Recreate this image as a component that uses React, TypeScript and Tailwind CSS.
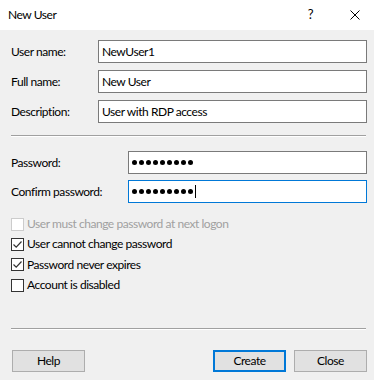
import React from "react";

const font = { fontFamily: 'Lato, "Noto Sans", sans-serif' };

function Field({ label, value, labelW, focused, password }: { label: string; value: string; labelW: string; focused?: boolean; password?: boolean }) {
  return (
    <div className="flex items-center">
      <div className={`${labelW} shrink-0 text-[12px] text-black`}>{label}</div>
      <div
        className={`flex h-[23px] flex-1 items-center bg-white px-[3px] text-[12px] text-black ${
          focused ? "border border-[#0078d7]" : "border border-[#7a7a7a]"
        }`}
      >
        {password ? (
          <span className="flex items-center">
            {Array.from({ length: 9 }).map((_, i) => (
              <span key={i} className="mr-[2px] inline-block h-[5px] w-[5px] rounded-full bg-black" />
            ))}
            {focused && <span className="inline-block h-[13px] w-px bg-black" />}
          </span>
        ) : (
          value
        )}
      </div>
    </div>
  );
}

function Check({ label, checked, disabled }: { label: string; checked?: boolean; disabled?: boolean }) {
  return (
    <div className="flex h-[20.3px] items-center">
      <div
        className={`flex h-[13px] w-[13px] items-center justify-center border bg-white ${
          disabled ? "border-[#cccccc]" : "border-[#333333]"
        }`}
      >
        {checked && (
          <svg width="11" height="11" viewBox="0 0 11 11">
            <path d="M1.5 5.5 L4.2 8.2 L9.5 2.5" fill="none" stroke="#333" strokeWidth="1.2" />
          </svg>
        )}
      </div>
      <span className={`ml-[3px] text-[12px] ${disabled ? "text-[#a0a0a0]" : "text-black"}`}>{label}</span>
    </div>
  );
}

function Btn({ label, primary }: { label: string; primary?: boolean }) {
  return (
    <button
      className={`flex h-[22px] w-[73px] items-center justify-center bg-[#e1e1e1] text-[12px] text-black ${
        primary ? "border-2 border-[#0078d7]" : "border border-[#adadad]"
      }`}
    >
      {label}
    </button>
  );
}

export default function App() {
  return (
    <div className="flex h-[380px] w-[374px] flex-col bg-[#f0f0f0] tracking-[-0.45px]" style={font}>
      {/* Title bar */}
      <div className="flex h-[30px] items-center bg-white pl-[8px] text-[12px] text-black">
        <span className="flex-1">New User</span>
        <span className="mr-[37px] text-[13px]">?</span>
        <svg width="10" height="10" viewBox="0 0 10 10" className="mr-[14px]">
          <path d="M0.5 0.5 L9.5 9.5 M9.5 0.5 L0.5 9.5" stroke="#000" strokeWidth="1" />
        </svg>
      </div>

      <div className="flex flex-1 flex-col pl-[11px] pr-[7px]">
        <div className="mt-[10px] flex flex-col gap-[7px]">
          <Field label="User name:" value="NewUser1" labelW="w-[87px]" />
          <Field label="Full name:" value="New User" labelW="w-[87px]" />
          <Field label="Description:" value="User with RDP access" labelW="w-[87px]" />
        </div>

        <div className="mt-[12px] mr-[1px] border-t border-b border-t-[#a0a0a0] border-b-white" />

        <div className="mt-[14px] flex flex-col gap-[6px]">
          <Field label="Password:" value="" labelW="w-[117px]" password />
          <Field label="Confirm password:" value="" labelW="w-[117px]" password focused />
        </div>

        <div className="mt-[11px] flex flex-col">
          <Check label="User must change password at next logon" disabled />
          <Check label="User cannot change password" checked />
          <Check label="Password never expires" checked />
          <Check label="Account is disabled" />
        </div>

        <div className="mt-[33px] mr-[1px] border-t border-b border-t-[#a0a0a0] border-b-white" />

        <div className="mt-[20px] flex items-center pl-[1px]">
          <Btn label="Help" />
          <div className="flex-1" />
          <Btn label="Create" primary />
          <div className="w-[8px]" />
          <Btn label="Close" />
        </div>
      </div>
    </div>
  );
}
